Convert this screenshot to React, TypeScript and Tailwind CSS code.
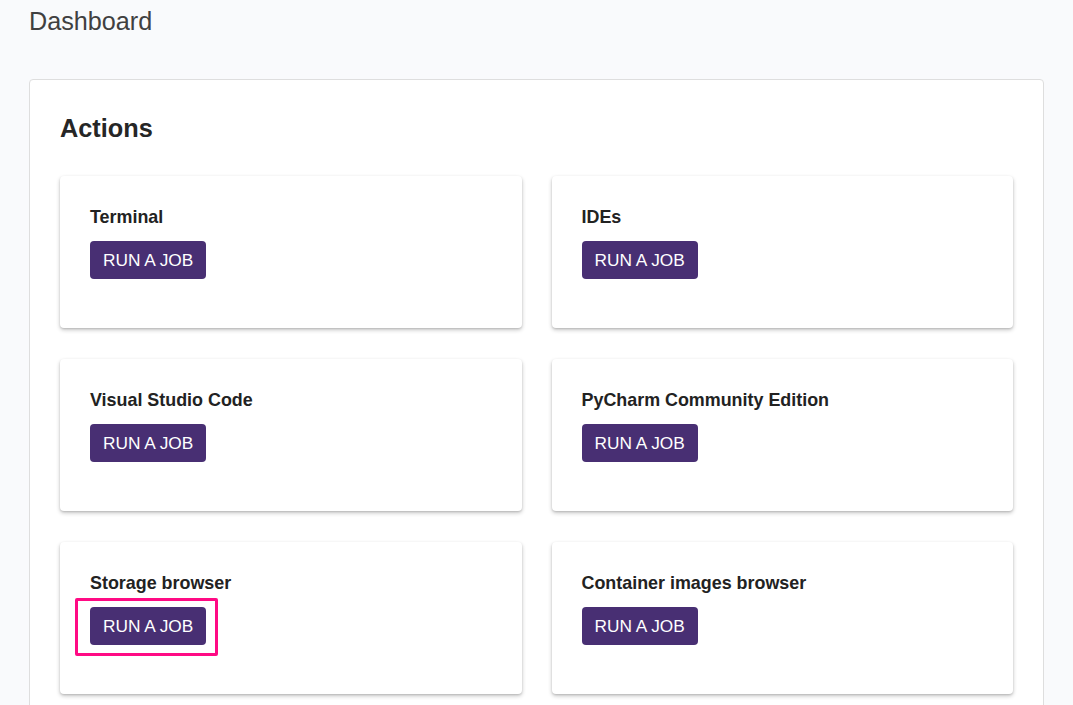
const actions = [
  { title: "Terminal" },
  { title: "IDEs" },
  { title: "Visual Studio Code" },
  { title: "PyCharm Community Edition" },
  { title: "Storage browser", highlighted: true },
  { title: "Container images browser" },
];

function ActionCard({ title, highlighted }: { title: string; highlighted?: boolean }) {
  return (
    <div className="h-[152px] rounded-[4px] bg-white px-[30px] pt-[29px] shadow-[0_2px_4px_rgba(0,0,0,0.22),0_1px_2px_rgba(0,0,0,0.12)]">
      <p className="text-[17.9px] font-bold leading-[24px] text-[#222]">{title}</p>
      <div className="mt-[12px] flex">
        <div className="relative">
          <button className="h-[38px] rounded-[4px] bg-[#482f73] px-[13px] pt-[2px] text-[17.3px] uppercase leading-none text-white">
            Run a job
          </button>
          {highlighted ? (
            <span className="pointer-events-none absolute -top-[9px] -right-[12px] -bottom-[11px] -left-[15px] rounded-[2px] border-[3px] border-[#ff0a84]" />
          ) : null}
        </div>
      </div>
    </div>
  );
}

export default function App() {
  return (
    <div
      className="min-h-screen bg-[#f9fafc] px-[29px] pt-[5px] pb-[20px]"
      style={{ fontFamily: '"Liberation Sans", Arial, sans-serif' }}
    >
      <h1 className="text-[25.2px] leading-[32px] text-[#404040]">Dashboard</h1>
      <section className="mt-[42px] rounded-[4px] border border-[#dedede] bg-white px-[30px] pt-[32px] pb-[30px]">
        <h2 className="text-[25.3px] font-bold leading-[32px] text-[#262626]">Actions</h2>
        <div className="mt-[32px] grid grid-cols-2 gap-x-[30px] gap-y-[31px]">
          {actions.map((action) => (
            <ActionCard key={action.title} title={action.title} highlighted={action.highlighted} />
          ))}
        </div>
      </section>
    </div>
  );
}
